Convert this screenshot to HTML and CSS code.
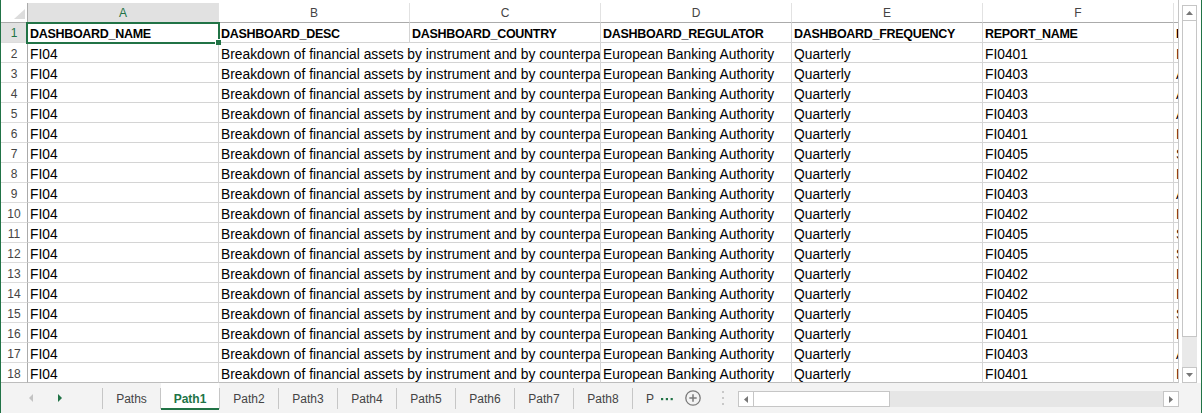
FILE: index.html
```html
<!DOCTYPE html>
<html>
<head>
<meta charset="utf-8">
<link rel="stylesheet" href="styles.css">
</head>
<body>
<div class="app">
  <div class="top">
    <div class="sheet">
      <div class="grid">
        <div class="ch corner"><svg width="26" height="19" viewBox="0 0 26 19"><polygon points="13,16 24,16 24,6" fill="#dcdcdc"/></svg></div>
        <div class="ch sel">A</div><div class="ch">B</div><div class="ch">C</div><div class="ch">D</div><div class="ch">E</div><div class="ch">F</div><div class="ch">G</div>

        <div class="rh sel">1</div><div class="c b">DASHBOARD_NAME</div><div class="c b">DASHBOARD_DESC</div><div class="c b">DASHBOARD_COUNTRY</div><div class="c b">DASHBOARD_REGULATOR</div><div class="c b">DASHBOARD_FREQUENCY</div><div class="c b">REPORT_NAME</div><div class="c b">R</div>

        <div class="rh">2</div><div class="c">FI04</div><div class="c span2">Breakdown of financial assets by instrument and by counterparty</div><div class="c">European Banking Authority</div><div class="c">Quarterly</div><div class="c">FI0401</div><div class="c">I</div>
        <div class="rh">3</div><div class="c">FI04</div><div class="c span2">Breakdown of financial assets by instrument and by counterparty</div><div class="c">European Banking Authority</div><div class="c">Quarterly</div><div class="c">FI0403</div><div class="c">A</div>
        <div class="rh">4</div><div class="c">FI04</div><div class="c span2">Breakdown of financial assets by instrument and by counterparty</div><div class="c">European Banking Authority</div><div class="c">Quarterly</div><div class="c">FI0403</div><div class="c">A</div>
        <div class="rh">5</div><div class="c">FI04</div><div class="c span2">Breakdown of financial assets by instrument and by counterparty</div><div class="c">European Banking Authority</div><div class="c">Quarterly</div><div class="c">FI0403</div><div class="c">A</div>
        <div class="rh">6</div><div class="c">FI04</div><div class="c span2">Breakdown of financial assets by instrument and by counterparty</div><div class="c">European Banking Authority</div><div class="c">Quarterly</div><div class="c">FI0401</div><div class="c">I</div>
        <div class="rh">7</div><div class="c">FI04</div><div class="c span2">Breakdown of financial assets by instrument and by counterparty</div><div class="c">European Banking Authority</div><div class="c">Quarterly</div><div class="c">FI0405</div><div class="c">S</div>
        <div class="rh">8</div><div class="c">FI04</div><div class="c span2">Breakdown of financial assets by instrument and by counterparty</div><div class="c">European Banking Authority</div><div class="c">Quarterly</div><div class="c">FI0402</div><div class="c">I</div>
        <div class="rh">9</div><div class="c">FI04</div><div class="c span2">Breakdown of financial assets by instrument and by counterparty</div><div class="c">European Banking Authority</div><div class="c">Quarterly</div><div class="c">FI0403</div><div class="c">A</div>
        <div class="rh">10</div><div class="c">FI04</div><div class="c span2">Breakdown of financial assets by instrument and by counterparty</div><div class="c">European Banking Authority</div><div class="c">Quarterly</div><div class="c">FI0402</div><div class="c">I</div>
        <div class="rh">11</div><div class="c">FI04</div><div class="c span2">Breakdown of financial assets by instrument and by counterparty</div><div class="c">European Banking Authority</div><div class="c">Quarterly</div><div class="c">FI0405</div><div class="c">S</div>
        <div class="rh">12</div><div class="c">FI04</div><div class="c span2">Breakdown of financial assets by instrument and by counterparty</div><div class="c">European Banking Authority</div><div class="c">Quarterly</div><div class="c">FI0405</div><div class="c">S</div>
        <div class="rh">13</div><div class="c">FI04</div><div class="c span2">Breakdown of financial assets by instrument and by counterparty</div><div class="c">European Banking Authority</div><div class="c">Quarterly</div><div class="c">FI0402</div><div class="c">I</div>
        <div class="rh">14</div><div class="c">FI04</div><div class="c span2">Breakdown of financial assets by instrument and by counterparty</div><div class="c">European Banking Authority</div><div class="c">Quarterly</div><div class="c">FI0402</div><div class="c">I</div>
        <div class="rh">15</div><div class="c">FI04</div><div class="c span2">Breakdown of financial assets by instrument and by counterparty</div><div class="c">European Banking Authority</div><div class="c">Quarterly</div><div class="c">FI0405</div><div class="c">S</div>
        <div class="rh">16</div><div class="c">FI04</div><div class="c span2">Breakdown of financial assets by instrument and by counterparty</div><div class="c">European Banking Authority</div><div class="c">Quarterly</div><div class="c">FI0401</div><div class="c">I</div>
        <div class="rh">17</div><div class="c">FI04</div><div class="c span2">Breakdown of financial assets by instrument and by counterparty</div><div class="c">European Banking Authority</div><div class="c">Quarterly</div><div class="c">FI0403</div><div class="c">A</div>
        <div class="rh last">18</div><div class="c last">FI04</div><div class="c span2 last">Breakdown of financial assets by instrument and by counterparty</div><div class="c last">European Banking Authority</div><div class="c last">Quarterly</div><div class="c last">FI0401</div><div class="c last">I</div>
      </div>
      <div class="selection"></div>
      <div class="handle"></div>
    </div>
    <div class="vscroll">
      <div class="vbtn"><svg width="7" height="4" viewBox="0 0 7 4"><polygon points="0,4 7,4 3.5,0" fill="#777"/></svg></div>
      <div class="vthumb"></div>
      <div class="vtrack"></div>
      <div class="vbtn"><svg width="7" height="4" viewBox="0 0 7 4"><polygon points="0,0 7,0 3.5,4" fill="#777"/></svg></div>
    </div>
  </div>
  <div class="tabbar">
    <div class="nav">
      <svg class="nav-left" width="5" height="8" viewBox="0 0 5 8"><polygon points="4,0 4,8 0,4" fill="#c3c3c3"/></svg>
      <svg class="nav-right" width="5" height="8" viewBox="0 0 5 8"><polygon points="0,0 4,4 0,8" fill="#217346"/></svg>
    </div>
    <span class="sep"></span>
    <div class="tab first">Paths</div><span class="sep"></span>
    <div class="tab active">Path1</div><span class="sep"></span>
    <div class="tab">Path2</div><span class="sep"></span>
    <div class="tab">Path3</div><span class="sep"></span>
    <div class="tab">Path4</div><span class="sep"></span>
    <div class="tab">Path5</div><span class="sep"></span>
    <div class="tab">Path6</div><span class="sep"></span>
    <div class="tab">Path7</div><span class="sep"></span>
    <div class="tab">Path8</div><span class="sep"></span>
    <div class="more">P<svg class="dots" width="12" height="3" viewBox="0 0 12 3"><rect x="0" y="0" width="2.2" height="2.2" fill="#217346"/><rect x="4.8" y="0" width="2.2" height="2.2" fill="#217346"/><rect x="9.6" y="0" width="2.2" height="2.2" fill="#217346"/></svg></div>
    <svg class="plus" width="16" height="16" viewBox="0 0 16 16"><circle cx="8" cy="8" r="7.2" fill="none" stroke="#7a7a7a" stroke-width="1.3"/><path d="M8 4.3V11.7M4.3 8H11.7" stroke="#7a7a7a" stroke-width="1.5"/></svg>
    <svg class="vdots" width="2" height="14" viewBox="0 0 2 14"><rect x="0" y="0" width="2" height="2" fill="#c8c8c8"/><rect x="0" y="6" width="2" height="2" fill="#c8c8c8"/><rect x="0" y="12" width="2" height="2" fill="#c8c8c8"/></svg>
    <div class="hscroll">
      <div class="hbtn"><svg width="4" height="7" viewBox="0 0 4 7"><polygon points="4,0 4,7 0,3.5" fill="#777"/></svg></div>
      <div class="hthumb"></div>
      <div class="htrack"></div>
      <div class="hbtn"><svg width="4" height="7" viewBox="0 0 4 7"><polygon points="0,0 4,3.5 0,7" fill="#777"/></svg></div>
    </div>
  </div>
</div>
</body>
</html>
```
FILE: styles.css
```css
html, body {
  margin: 0;
  padding: 0;
  background: #fff;
}
body {
  font-family: "Liberation Sans", Arial, sans-serif;
  color: #000;
}
.app {
  width: 1200px;
  height: 413px;
  border-left: 1px solid #217346;
  border-right: 1px solid #217346;
  display: flex;
  flex-direction: column;
  overflow: hidden;
}
.top {
  display: flex;
  height: 383px;
  flex: none;
}
.sheet {
  position: relative;
  width: 1178px;
  height: 383px;
  box-sizing: border-box;
  border-right: 1px solid #c6c6c6;
  padding-top: 3px;
  overflow: hidden;
  background: #fff;
}
.grid {
  display: grid;
  width: 1213px;
  grid-template-columns: 27px repeat(6, 191px) 40px;
  grid-auto-rows: 20px;
}
.grid > div {
  box-sizing: border-box;
  overflow: hidden;
  white-space: nowrap;
}
.ch {
  border-right: 1px solid #e2e2e2;
  border-bottom: 1px solid #ababab;
  text-align: center;
  font-size: 12px;
  line-height: 20px;
  color: #444;
  background: #fff;
}
.ch.corner {
  border-right: 1px solid #ababab;
  line-height: 0;
}
.rh {
  border-right: 1px solid #ababab;
  border-bottom: 1px solid #dcdcdc;
  text-align: center;
  font-size: 12px;
  line-height: 23px;
  color: #444;
  background: #fff;
}
.sel {
  background: #e1e1e1;
  color: #217346;
}
.rh.sel {
  line-height: 21px;
}
.c {
  border-right: 1px solid #d4d4d4;
  border-bottom: 1px solid #d4d4d4;
  padding-left: 2px;
  font-size: 13.8px;
  line-height: 23px;
}
.c.b {
  font-weight: bold;
  font-size: 12.5px;
  letter-spacing: -0.3px;
  line-height: 22px;
}
.span2 {
  grid-column: span 2;
}
.last {
  border-bottom-color: #bdbdbd !important;
}
.selection {
  position: absolute;
  left: 25px;
  top: 22px;
  width: 194px;
  height: 22px;
  box-sizing: border-box;
  border: 2px solid #217346;
}
.handle {
  position: absolute;
  left: 214px;
  top: 39px;
  width: 5px;
  height: 5px;
  background: #217346;
  border-left: 1px solid #fff;
  border-top: 1px solid #fff;
}
.vscroll {
  width: 22px;
  height: 383px;
  box-sizing: border-box;
  padding: 5px 0 0 3px;
  display: flex;
  flex-direction: column;
  background: #fff;
}
.vbtn {
  width: 15px;
  height: 16px;
  box-sizing: border-box;
  border: 1px solid #c6c6c6;
  background: #fff;
  display: flex;
  align-items: center;
  justify-content: center;
  flex: none;
}
.vthumb {
  width: 15px;
  height: 316px;
  box-sizing: border-box;
  border: 1px solid #c6c6c6;
  border-top: 0;
  background: #fff;
  flex: none;
}
.vtrack {
  width: 15px;
  flex: 1;
  background: #e9e9e9;
}
.tabbar {
  height: 30px;
  flex: none;
  display: flex;
  align-items: flex-start;
  background: #f3f3f3;
  font-size: 12px;
  color: #444;
}
.nav {
  width: 101px;
  height: 30px;
  flex: none;
  display: flex;
  align-items: center;
}
.nav-left {
  margin-left: 28px;
}
.nav-right {
  margin-left: 24px;
}
.sep {
  width: 1px;
  height: 21px;
  margin-top: 5px;
  background: #c6c6c6;
  flex: none;
}
.tab {
  width: 58px;
  height: 27px;
  box-sizing: border-box;
  padding-top: 8px;
  line-height: 17px;
  text-align: center;
  border-bottom: 2px solid transparent;
  flex: none;
}
.tab.first {
  width: 57px;
}
.tab.active {
  background: #fff;
  color: #217346;
  font-weight: bold;
  border-bottom-color: #217346;
}
.more {
  height: 27px;
  box-sizing: border-box;
  padding: 8px 0 0 13px;
  line-height: 17px;
  white-space: nowrap;
  flex: none;
}
.dots {
  margin-left: 7px;
  vertical-align: 2px;
}
.plus {
  align-self: center;
  margin-left: 12px;
  flex: none;
}
.vdots {
  align-self: center;
  margin-left: 21px;
  flex: none;
}
.hscroll {
  align-self: center;
  margin: 2px 22px 0 14px;
  flex: 1;
  height: 16px;
  display: flex;
}
.hbtn {
  width: 16px;
  height: 16px;
  box-sizing: border-box;
  border: 1px solid #c6c6c6;
  background: #fff;
  display: flex;
  align-items: center;
  justify-content: center;
  flex: none;
}
.hthumb {
  width: 136px;
  height: 16px;
  box-sizing: border-box;
  border: 1px solid #c6c6c6;
  border-left: 0;
  background: #fff;
  flex: none;
}
.htrack {
  flex: 1;
  background: #e6e6e6;
}
```
